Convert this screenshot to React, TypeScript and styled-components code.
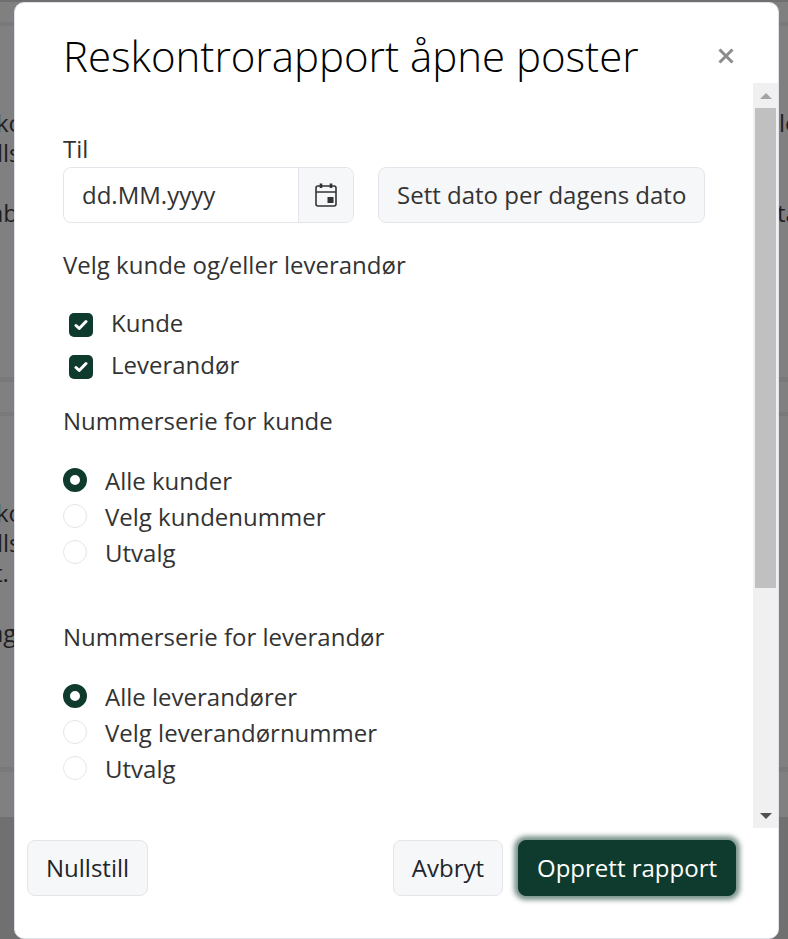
import React from "react";
import styled, { createGlobalStyle } from "styled-components";

const Global = createGlobalStyle`
  html, body { margin: 0; padding: 0; height: 939px; overflow: hidden; }
  body { font-family: "Open Sans", "Noto Sans", sans-serif; color: #333; }
  * { box-sizing: border-box; }
`;

const Page = styled.div`
  position: relative;
  width: 788px;
  height: 939px;
  overflow: hidden;
  background: #808080;
`;

const BackdropText = styled.span<{ $left: number; $top: number }>`
  position: absolute;
  left: ${(p) => p.$left}px;
  top: ${(p) => p.$top}px;
  font-size: 24px;
  line-height: 30px;
  color: #1f1f1f;
  white-space: nowrap;
`;

const BackdropLine = styled.div<{ $top: number; $height: number; $color?: string }>`
  position: absolute;
  left: 0;
  right: 0;
  top: ${(p) => p.$top}px;
  height: ${(p) => p.$height}px;
  background: ${(p) => p.$color ?? "#797979"};
`;

const Modal = styled.div`
  position: absolute;
  left: 14px;
  top: 2px;
  width: 765px;
  height: 937px;
  background: #fff;
  border: 1px solid #dfe1e8;
  border-radius: 10px;
  display: flex;
  flex-direction: column;
  overflow: hidden;
`;

const Header = styled.div`
  height: 80px;
  flex: none;
  display: flex;
  align-items: flex-start;
  justify-content: space-between;
  padding: 27px 42px 0 48px;
`;

const Title = styled.h1`
  margin: 0;
  font-size: 42px;
  line-height: 52px;
  font-weight: 300;
  color: #000;
  white-space: nowrap;
`;

const Close = styled.button`
  border: 0;
  background: none;
  padding: 0;
  margin-top: 16px;
  width: 20px;
  height: 20px;
  color: #8c8c8c;
  display: flex;
`;

const ScrollArea = styled.div`
  flex: 1;
  min-height: 0;
  display: flex;
`;

const Body = styled.div`
  flex: 1;
  padding: 51px 0 0 48px;
  font-size: 24px;
`;

const FieldLabel = styled.div`
  font-size: 24px;
  line-height: 30px;
  height: 33px;
`;

const DateRow = styled.div`
  display: flex;
  gap: 24px;
`;

const DateGroup = styled.div`
  width: 291px;
  height: 56px;
  display: flex;
  border: 1px solid #e3e5ea;
  border-radius: 8px;
  overflow: hidden;
`;

const DateInput = styled.div`
  flex: 1;
  padding-left: 18px;
  line-height: 54px;
  font-size: 24px;
`;

const DateIcon = styled.div`
  width: 55px;
  background: #f6f7f9;
  border-left: 1px solid #e3e5ea;
  display: flex;
  align-items: center;
  justify-content: center;
`;

const Button = styled.button`
  height: 56px;
  padding: 0 18px 2px;
  border: 1px solid #e3e5ea;
  border-radius: 8px;
  background: #f6f7f9;
  color: #333;
  font-family: inherit;
  font-size: 24px;
  white-space: nowrap;
`;

const SectionLabel = styled.div<{ $top: number; $bottom: number }>`
  font-size: 24px;
  line-height: 30px;
  margin-top: ${(p) => p.$top}px;
  margin-bottom: ${(p) => p.$bottom}px;
`;

const CheckRow = styled.div`
  height: 42px;
  display: flex;
  align-items: center;
  padding-left: 6px;
  gap: 18px;
`;

const CheckLabel = styled.span`
  position: relative;
  top: -3px;
`;

const CheckBox = styled.span`
  width: 24px;
  height: 24px;
  border-radius: 5px;
  background: #0f3b2e;
  display: flex;
  align-items: center;
  justify-content: center;
`;

const RadioRow = styled.div`
  height: 36px;
  display: flex;
  align-items: center;
  gap: 18px;
`;

const Radio = styled.span<{ $on?: boolean }>`
  width: 24px;
  height: 24px;
  border-radius: 50%;
  background: #fff;
  border: ${(p) => (p.$on ? "7px solid #0f3b2e" : "1px solid #e3e5ea")};
`;

const Scrollbar = styled.div`
  width: 25px;
  flex: none;
  background: #f0f0f0;
  display: flex;
  flex-direction: column;
  align-items: center;
`;

const ScrollEnd = styled.div`
  height: 25px;
  flex: none;
  display: flex;
  align-items: center;
  justify-content: center;
`;

const Thumb = styled.div`
  width: 21px;
  height: 480px;
  background: #c0c0c0;
`;

const Spacer = styled.div`
  flex: 1;
`;

const Footer = styled.div`
  height: 110px;
  flex: none;
  display: flex;
  align-items: flex-start;
  padding: 12px 42px 0 12px;
  gap: 15px;
`;

const Primary = styled(Button)`
  background: #0f3b2e;
  border-color: #0f3b2e;
  color: #fff;
  box-shadow: 0 0 5px 4px rgba(15, 59, 46, 0.55);
`;

const FooterButton = styled(Button)`
  color: #212529;
`;

const Check = () => (
  <svg width="14" height="14" viewBox="0 0 14 14" fill="none">
    <path d="M2 7.5 5.2 10.5 12 3.5" stroke="#fff" strokeWidth="3" strokeLinecap="round" strokeLinejoin="round" />
  </svg>
);

export default function App() {
  return (
    <Page>
      <Global />
      <BackdropLine $top={0} $height={2} $color="#6f6f6f" />
      <BackdropLine $top={22} $height={4} />
      <BackdropLine $top={377} $height={5} />
      <BackdropLine $top={412} $height={4} />
      <BackdropLine $top={767} $height={5} />
      <BackdropLine $top={817} $height={122} $color="#707070" />
      <BackdropText $left={-4} $top={108}>ko</BackdropText>
      <BackdropText $left={-3} $top={138}>lls</BackdropText>
      <BackdropText $left={-10} $top={198}>ab</BackdropText>
      <BackdropText $left={-4} $top={498}>ko</BackdropText>
      <BackdropText $left={-3} $top={528}>lls</BackdropText>
      <BackdropText $left={-6} $top={558}>t.</BackdropText>
      <BackdropText $left={-10} $top={618}>ag</BackdropText>
      <BackdropText $left={779} $top={108}>le</BackdropText>
      <BackdropText $left={777} $top={198}>ta</BackdropText>
      <Modal>
        <Header>
          <Title>Reskontrorapport åpne poster</Title>
          <Close aria-label="Lukk">
            <svg width="20" height="20" viewBox="0 0 20 20">
              <path d="M3.5 3.5 16.5 16.5M16.5 3.5 3.5 16.5" stroke="currentColor" strokeWidth="3" />
            </svg>
          </Close>
        </Header>
        <ScrollArea>
          <Body>
            <FieldLabel>Til</FieldLabel>
            <DateRow>
              <DateGroup>
                <DateInput>dd.MM.yyyy</DateInput>
                <DateIcon>
                  <svg width="22" height="24" viewBox="0 0 22 24" fill="none">
                    <rect x="1" y="3" width="20" height="20" rx="2" stroke="#333" strokeWidth="1.6" />
                    <path d="M1 9h20" stroke="#333" strokeWidth="1.6" />
                    <path d="M6 0.5v4.5M16 0.5v4.5" stroke="#333" strokeWidth="2.6" />
                    <rect x="12.5" y="14" width="6" height="6" fill="#333" />
                  </svg>
                </DateIcon>
              </DateGroup>
              <Button>Sett dato per dagens dato</Button>
            </DateRow>
            <SectionLabel $top={27} $bottom={24}>Velg kunde og/eller leverandør</SectionLabel>
            <CheckRow><CheckBox><Check /></CheckBox><CheckLabel>Kunde</CheckLabel></CheckRow>
            <CheckRow><CheckBox><Check /></CheckBox><CheckLabel>Leverandør</CheckLabel></CheckRow>
            <SectionLabel $top={18} $bottom={26}>Nummerserie for kunde</SectionLabel>
            <RadioRow><Radio $on />Alle kunder</RadioRow>
            <RadioRow><Radio />Velg kundenummer</RadioRow>
            <RadioRow><Radio />Utvalg</RadioRow>
            <SectionLabel $top={52} $bottom={26}>Nummerserie for leverandør</SectionLabel>
            <RadioRow><Radio $on />Alle leverandører</RadioRow>
            <RadioRow><Radio />Velg leverandørnummer</RadioRow>
            <RadioRow><Radio />Utvalg</RadioRow>
          </Body>
          <Scrollbar>
            <ScrollEnd>
              <svg width="12" height="6" viewBox="0 0 12 6"><path d="M6 0 12 6H0z" fill="#a3a3a3" /></svg>
            </ScrollEnd>
            <Thumb />
            <Spacer />
            <ScrollEnd>
              <svg width="12" height="6" viewBox="0 0 12 6"><path d="M0 0H12L6 6z" fill="#505050" /></svg>
            </ScrollEnd>
          </Scrollbar>
        </ScrollArea>
        <Footer>
          <FooterButton>Nullstill</FooterButton>
          <Spacer />
          <FooterButton>Avbryt</FooterButton>
          <Primary>Opprett rapport</Primary>
        </Footer>
      </Modal>
    </Page>
  );
}
